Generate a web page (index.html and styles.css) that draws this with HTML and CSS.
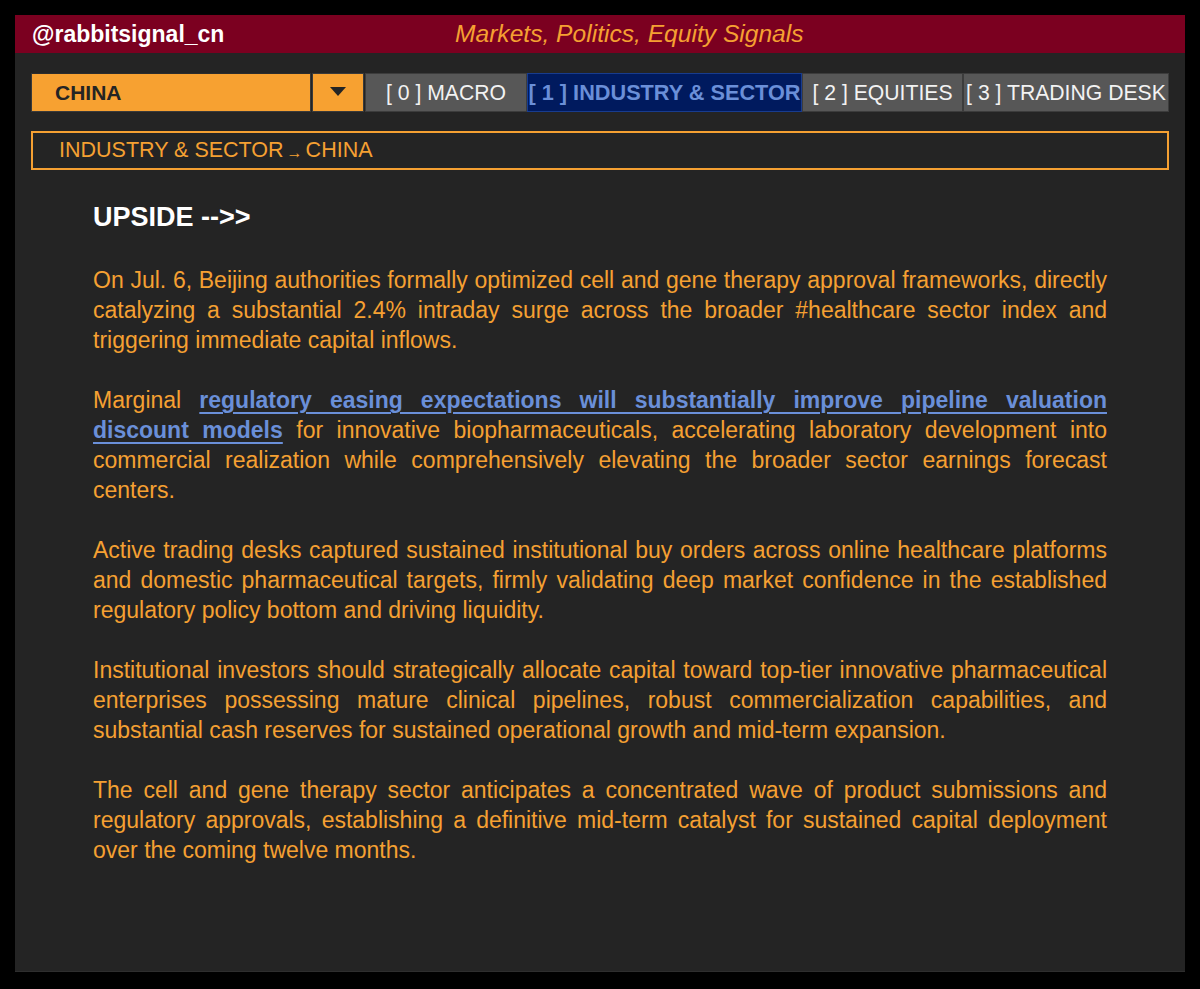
FILE: index.html
```html
<!doctype html>
<html lang="en">
    <head>
        <meta charset="UTF-8" />
        <meta name="viewport" content="width=device-width, initial-scale=1.0" />
        <title>@rabbitsignal_cn - Industry &amp; Sector</title>
        <link rel="stylesheet" href="styles.css">
    </head>
    <body>
        <div class="panel">
            <div class="topbar">
                <div class="handle">@rabbitsignal_cn</div>
                <div class="tagline">Markets, Politics, Equity Signals</div>
            </div>

            <div class="nav">
                <div class="region">CHINA</div>
                <div class="region-toggle">
                    <svg width="16" height="10" viewBox="0 0 16 10">
                        <polygon points="0,0 16,0 8,9" fill="#242424" />
                    </svg>
                </div>
                <div class="tabs">
                    <div class="tab">[ 0 ] MACRO</div>
                    <div class="tab active">[ 1 ] INDUSTRY &amp; SECTOR</div>
                    <div class="tab">[ 2 ] EQUITIES</div>
                    <div class="tab">[ 3 ] TRADING DESK</div>
                </div>
            </div>

            <div class="crumb">INDUSTRY &amp; SECTOR<span class="arrow">→</span>CHINA</div>

            <div class="article">
                <h1>UPSIDE --&gt;&gt;</h1>

                <p>
                    On Jul. 6, Beijing authorities formally optimized cell and gene
                    therapy approval frameworks, directly catalyzing a substantial
                    2.4% intraday surge across the broader #healthcare sector index
                    and triggering immediate capital inflows.
                </p>

                <p>
                    Marginal <a href="#" class="signal">regulatory easing expectations
                    will substantially improve pipeline valuation discount models</a>
                    for innovative biopharmaceuticals, accelerating laboratory
                    development into commercial realization while comprehensively
                    elevating the broader sector earnings forecast centers.
                </p>

                <p>
                    Active trading desks captured sustained institutional buy orders
                    across online healthcare platforms and domestic pharmaceutical
                    targets, firmly validating deep market confidence in the
                    established regulatory policy bottom and driving liquidity.
                </p>

                <p>
                    Institutional investors should strategically allocate capital
                    toward top-tier innovative pharmaceutical enterprises possessing
                    mature clinical pipelines, robust commercialization capabilities,
                    and substantial cash reserves for sustained operational growth
                    and mid-term expansion.
                </p>

                <p>
                    The cell and gene therapy sector anticipates a concentrated wave
                    of product submissions and regulatory approvals, establishing a
                    definitive mid-term catalyst for sustained capital deployment
                    over the coming twelve months.
                </p>
            </div>
        </div>
    </body>
</html>
```

FILE: styles.css
```css
* {
    margin: 0;
    padding: 0;
    box-sizing: border-box;
}
body {
    font-family: "Liberation Sans", Arial, sans-serif;
    background-color: #000000;
    color: #f5a032;
    padding: 15px;
}
.panel {
    background-color: #242424;
    min-height: 957px;
    border-bottom: 1px solid #2e2e2e;
}
.topbar {
    background-color: #7b0020;
    height: 38px;
    display: grid;
    grid-template-columns: 423px 1fr;
    align-items: center;
    padding-left: 17px;
}
.handle {
    color: #ffffff;
    font-size: 23px;
    font-weight: bold;
}
.tagline {
    font-style: italic;
    font-size: 24.6px;
}
.nav {
    display: flex;
    height: 39px;
    margin: 20px 16px 0 16px;
}
.region {
    width: 280px;
    background-color: #f7a131;
    color: #242424;
    font-size: 21px;
    font-weight: bold;
    padding-left: 23px;
    display: flex;
    align-items: center;
    border: 1px solid #3a3a3a;
    border-top-color: #2c2c2c;
}
.region-toggle {
    width: 52px;
    background-color: #f7a131;
    display: flex;
    align-items: center;
    justify-content: center;
    border: 1px solid #3a3a3a;
    margin-left: 1px;
    padding-bottom: 1px;
}
.tabs {
    flex: 1;
    display: grid;
    grid-template-columns: 162px 275px 161px 1fr;
    margin-left: 1px;
}
.tab {
    background-color: #575757;
    color: #f2f2f2;
    font-size: 21.2px;
    display: flex;
    align-items: center;
    justify-content: center;
    white-space: nowrap;
    border: 1px solid #3c3c3c;
}
.tab.active {
    background-color: #001a5e;
    border-color: #183c8e;
    color: #6a8fd8;
    font-size: 21.7px;
    font-weight: bold;
}
.crumb {
    margin: 19px 16px 0 16px;
    height: 39px;
    border: 2px solid #f5a032;
    font-size: 21.5px;
    padding-left: 26px;
    display: flex;
    align-items: center;
}
.arrow {
    font-size: 16px;
    margin: 4px 3px 0 3px;
}
.article {
    padding: 31px 78px 40px 78px;
}
h1 {
    color: #ffffff;
    font-size: 27px;
    line-height: 32px;
    margin-bottom: 32px;
}
p {
    font-size: 23px;
    line-height: 30px;
    text-align: justify;
    margin-bottom: 30px;
}
.signal {
    color: #6a8fd8;
    font-weight: bold;
    text-decoration: underline;
    text-decoration-thickness: 2px;
    text-underline-offset: 4px;
}
```
